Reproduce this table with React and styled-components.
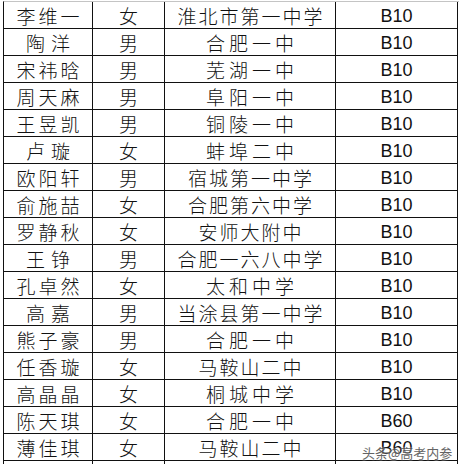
import React from 'react'
import styled, { createGlobalStyle } from 'styled-components'

const GlobalStyle = createGlobalStyle`
  html, body {
    margin: 0;
    padding: 0;
    background: #fff;
    overflow: hidden;
  }
`

const Page = styled.div`
  position: relative;
  width: 459px;
  height: 464px;
  padding: 1px 0 0 3px;
  box-sizing: border-box;
  overflow: hidden;
`

const Table = styled.div`
  display: grid;
  grid-template-columns: 89px 72px 171px 122px;
  grid-auto-rows: 27px;
  width: 455px;
  border-left: 1px solid #111;
  border-top: 1px solid #c4c4c4;
`

const Cell = styled.div`
  display: flex;
  align-items: center;
  justify-content: center;
  box-sizing: border-box;
  border-right: 1px solid #111;
  border-bottom: 1px solid #111;
  color: #111;
  font-family: ${props => (props.code ? '"Liberation Sans", Arial, sans-serif' : '"Noto Sans CJK SC", sans-serif')};
  font-weight: ${props => (props.code ? 400 : 300)};
  font-size: ${props => (props.code ? '18px' : '19px')};
  letter-spacing: ${props => props.spacing || 0}px;
  padding-left: ${props => props.spacing || 0}px;
  padding-top: 1px;
  white-space: nowrap;
  line-height: 1;
`

const Watermark = styled.div`
  position: absolute;
  left: 362px;
  top: 443px;
  font-family: "Noto Sans CJK SC", sans-serif;
  font-size: 13px;
  color: #4a4a4a;
  opacity: 0.85;
  text-shadow: 0 0 2px #fff, 0 0 2px #fff;
  white-space: nowrap;
`

const rows = [
  ['李维一', '女', '淮北市第一中学', 'B10'],
  ['陶洋', '男', '合肥一中', 'B10'],
  ['宋祎晗', '男', '芜湖一中', 'B10'],
  ['周天麻', '男', '阜阳一中', 'B10'],
  ['王昱凯', '男', '铜陵一中', 'B10'],
  ['卢璇', '女', '蚌埠二中', 'B10'],
  ['欧阳轩', '男', '宿城第一中学', 'B10'],
  ['俞施喆', '女', '合肥第六中学', 'B10'],
  ['罗静秋', '女', '安师大附中', 'B10'],
  ['王铮', '男', '合肥一六八中学', 'B10'],
  ['孔卓然', '女', '太和中学', 'B10'],
  ['高嘉', '男', '当涂县第一中学', 'B10'],
  ['熊子豪', '男', '合肥一中', 'B10'],
  ['任香璇', '女', '马鞍山二中', 'B10'],
  ['高晶晶', '女', '桐城中学', 'B10'],
  ['陈天琪', '女', '合肥一中', 'B60'],
  ['薄佳琪', '女', '马鞍山二中', 'B60'],
  ['', '', '', ''],
]

const App = () => (
  <Page>
    <GlobalStyle />
    <Table>
      {rows.map((r, i) => (
        <React.Fragment key={i}>
          <Cell spacing={r[0].length === 2 ? 6 : 3}>{r[0]}</Cell>
          <Cell>{r[1]}</Cell>
          <Cell spacing={r[2].length <= 4 ? 4 : 2}>{r[2]}</Cell>
          <Cell code>{r[3]}</Cell>
        </React.Fragment>
      ))}
    </Table>
    <Watermark>头条@高考内参</Watermark>
  </Page>
)

export default App
